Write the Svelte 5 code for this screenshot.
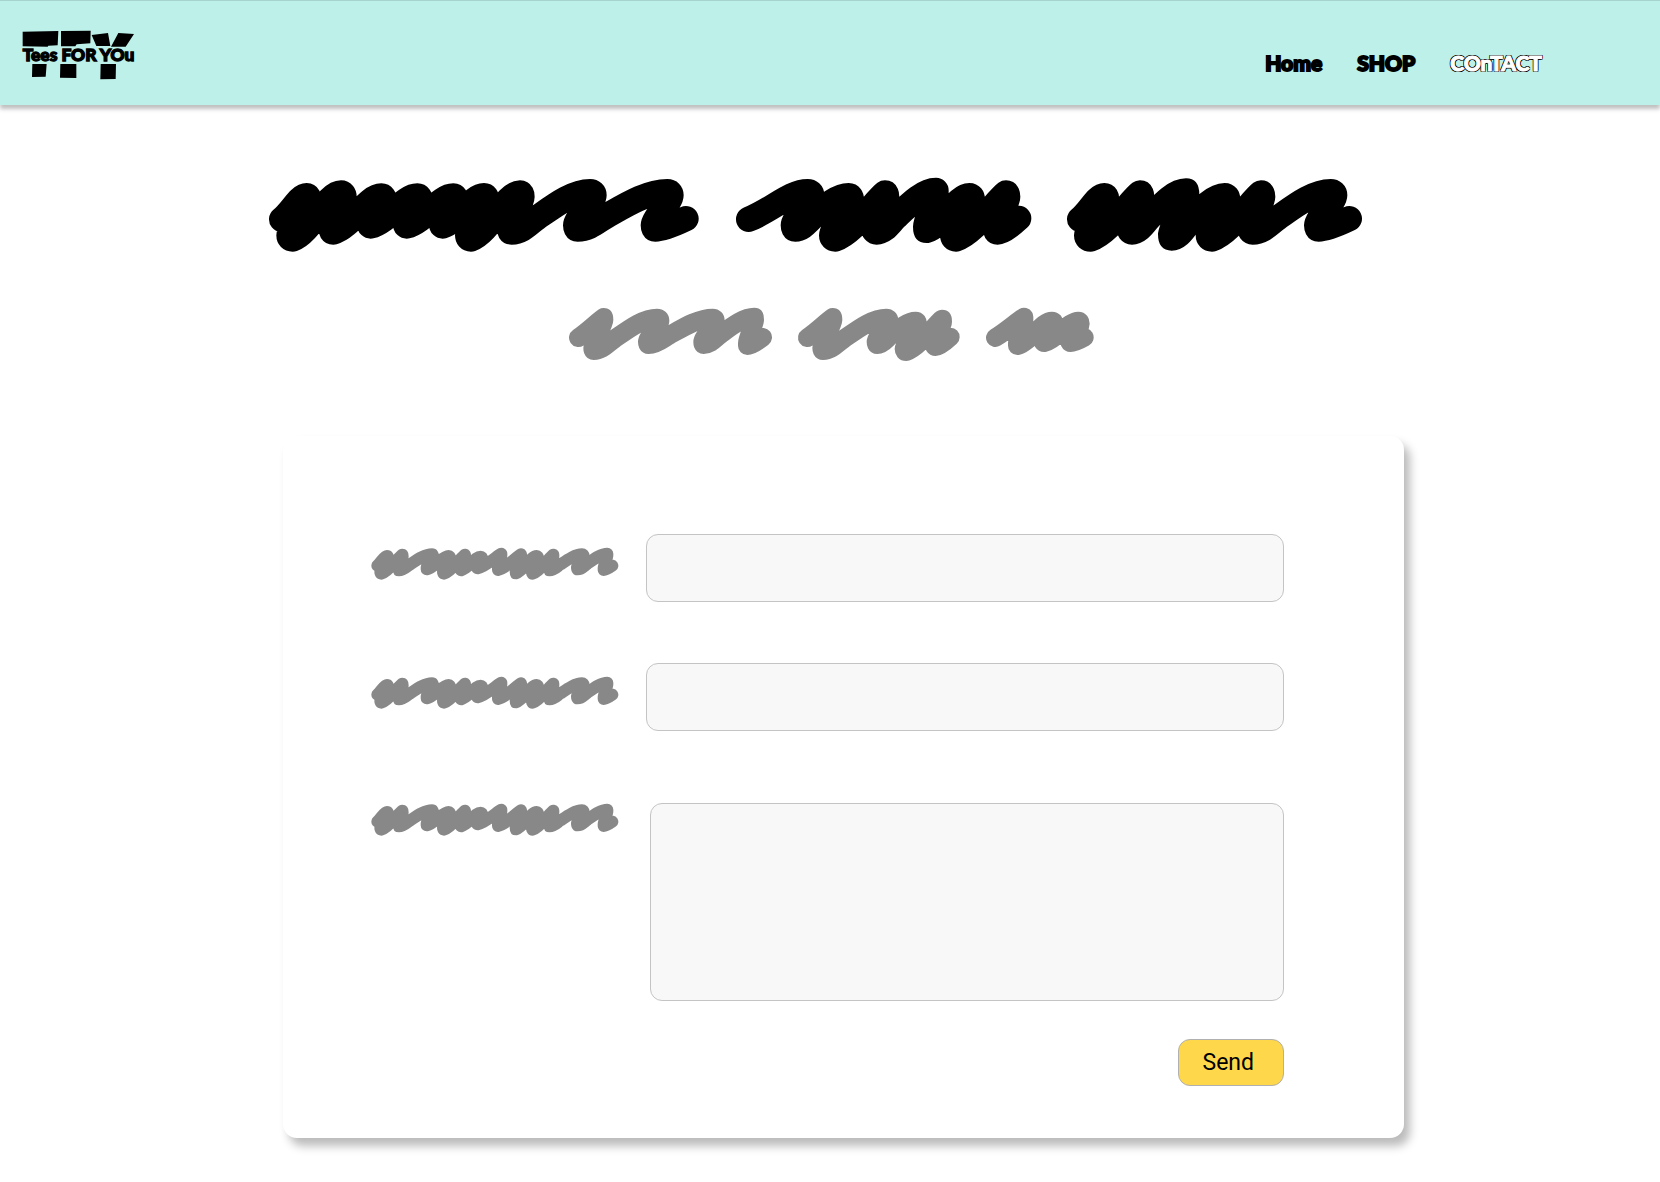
<script>
  // A scribble is a pen line: start point, alternating peaks and valleys, end point.
  // Peak: [top x, top y, right edge x]; valley: [bottom x, bottom y, left edge x].
  function scribble({ r, start, turns, end }) {
    const k = Math.round(r * 0.3);
    let [x, y] = start;
    let d = `M${x} ${y}`;
    turns.forEach(([tx, ty, edge], i) => {
      if (i % 2 === 0) {
        const px = Math.min(tx, edge - r);
        const py = ty + r;
        const rx = edge - r;
        const dx = px - x;
        const dy = py - y;
        const narrow = rx - tx < r * 0.15;
        if (i > 0 && dx > r * 4) {
          // a long sweep climbs out of the valley first, then runs almost straight
          d += `C${x + dx * 0.14} ${y} ${x + dx * 0.23} ${y + dy * 0.23} ${x + dx * 0.33} ${y + dy * 0.36}`;
          d += `C${x + dx * 0.55} ${y + dy * 0.66} ${px - dx * 0.22} ${py} ${px} ${py}`;
        } else {
          const c1 = i === 0 ? [x + dx * 0.4, y + dy * 0.34] : [x + dx * 0.38, y + dy * 0.14];
          const c2 = narrow ? [px - dx * 0.2, py - dy * 0.16] : [px - dx * 0.3, py];
          d += `C${c1[0]} ${c1[1]} ${c2[0]} ${c2[1]} ${px} ${py}`;
        }
        d += `Q${rx} ${py} ${rx} ${py + k}`;
        x = rx;
        y = py + k;
      } else {
        const by = ty - r;
        const lx = edge + r;
        const bx = Math.max(tx, lx);
        d += `C${x} ${y + k * 2} ${lx} ${by - k * 3} ${lx} ${by - k}`;
        d += `Q${lx} ${by} ${bx} ${by}`;
        x = bx;
        y = by;
      }
    });
    return `${d}Q${x + (end[0] - x) * 0.3} ${y} ${end[0]} ${end[1]}`;
  }

  const title = [
    { r: 38, box: '27 36 1290 225', w: 430, start: [65, 163], end: [1278, 161],
      turns: [[140,54,184],[98,260,49],[243,46,290],[220,239,175],[364,55,410],[332,221,290],[472,55,518],[440,221,398],[580,55,625],[548,221,506],[672,54,718],[633,260,585],[780,46,824],[755,239,710],[990,42,1040],[953,230,909],[1222,42,1271],[1186,230,1142]] },
    { r: 38, box: '47 36 888 225', w: 296, start: [88, 163], end: [898, 160],
      turns: [[265,42,315],[228,230,184],[388,54,434],[348,260,299],[497,46,540],[472,239,425],[650,38,688],[622,234,581],[750,54,797],[710,260,662],[860,46,903],[835,239,790]] },
    { r: 38, box: '51 36 888 225', w: 296, start: [89, 163], end: [898, 161],
      turns: [[163,54,208],[122,260,72],[270,46,313],[246,239,200],[408,40,448],[365,257,324],[524,54,571],[486,260,437],[633,46,676],[608,239,562],[842,42,892],[806,230,762]] }
  ];

  const subtitle = [
    { r: 28, box: '26 36 609 165', w: 203, start: [54, 128], end: [607, 127],
      turns: [[130,39,159],[100,195,69],[290,41,327],[265,177,233],[457,41,493],[430,177,399],[582,38,611],[561,180,533]] },
    { r: 28, box: '55 36 486 165', w: 162, start: [83, 128], end: [512, 126],
      turns: [[159,39,188],[130,195,98],[320,41,356],[293,177,261],[408,50,442],[380,198,345],[487,44,517],[468,183,435]] },
    { r: 28, box: '618 36 324 165', w: 108, start: [646, 128], end: [913, 127],
      turns: [[732,38,760],[711,180,684],[816,50,851],[793,171,760],[895,50,929],[872,171,840]] }
  ];

  const labelMark = {
    r: 18, box: '33 81 744 99', w: 248, start: [52, 137], end: [757, 137],
    turns: [[81,90,102],[64,179,43],[127,86,146],[117,169,98],[216,85,237],[200,166,182],[266,90,288],[252,179,231],[315,86,333],[303,169,285],[362,92,384],[352,163,334],[425,83,442],[413,168,396],[486,85,501],[468,178,449],[530,90,552],[518,179,498],[580,86,598],[569,169,550],[666,85,689],[653,166,633],[742,83,760],[731,168,713]]
  };
</script>

{#snippet mark(word, height)}
  <svg class="mark" viewBox={word.box} width={word.w} {height} aria-hidden="true">
    <path d={scribble(word)} stroke-width={word.r * 2} />
  </svg>
{/snippet}

<div class="page">
  <header>
    <a class="logo" href="#home" aria-label="Tees for you">
      <svg viewBox="66 90 342 150" width="114" height="50">
        <path d="M68 95L175 93L173 136L145 137L143 140L68 139ZM183 93L272 92L271 130L230 133L226 139L183 139ZM275 105L324 99L331 138L289 138ZM355 99L402 102L377 140L333 140ZM97 192L140 192L137 230L96 231ZM181 192L229 192L229 234L180 233ZM302 192L348 192L347 237L301 238Z" />
        <text x="68" y="184">Tees FOR YOu</text>
      </svg>
    </a>
    <nav>
      <a href="#home">Home</a>
      <a href="#shop">SHOP</a>
      <a class="current" href="#contact" aria-current="page">COnTACT</a>
    </nav>
  </header>

  <main>
    <h1>{#each title as word}{@render mark(word, 75)}{/each}</h1>
    <h2>{#each subtitle as word}{@render mark(word, 55)}{/each}</h2>

    <form>
      <div class="row">
        <label for="first">{@render mark(labelMark, 33)}</label>
        <input id="first" type="text" />
      </div>
      <div class="row">
        <label for="second">{@render mark(labelMark, 33)}</label>
        <input id="second" type="text" />
      </div>
      <div class="row message">
        <label for="message">{@render mark(labelMark, 33)}</label>
        <textarea id="message"></textarea>
      </div>
      <button type="button">Send</button>
    </form>
  </main>
</div>

<style>
  :global(body) {
    background: #fff;
  }
  .page {
    font-family: Roboto, 'Liberation Sans', sans-serif;
    color: #000;
    padding-bottom: 43px;
  }
  header {
    display: flex;
    align-items: center;
    justify-content: space-between;
    box-sizing: border-box;
    height: 105px;
    padding: 0 118px 0 22px;
    background: #bdf0e8;
    border-top: 1px solid #a6d3cc;
    box-shadow: 0 4px 4px rgba(0, 0, 0, 0.25);
  }
  .logo svg {
    display: block;
    margin-top: 4px;
    overflow: visible;
  }
  .logo text {
    font-family: Lato, sans-serif;
    font-weight: 900;
    font-size: 52px;
    stroke: #000;
    stroke-width: 4px;
  }
  nav {
    display: flex;
    gap: 35px;
    padding-top: 20px;
  }
  nav a {
    font-family: Lato, sans-serif;
    font-size: 21px;
    line-height: 28px;
    font-weight: 900;
    color: #000;
    text-decoration: none;
    -webkit-text-stroke: 2px #000;
  }
  nav .current {
    color: #fff;
    -webkit-text-stroke: 1px #fff;
    text-shadow:
      -1px -1px #000,
      1px -1px #000,
      -1px 1px #000,
      1px 1px #000,
      -1px 0 #000,
      1px 0 #000,
      0 -1px #000,
      0 1px #000;
  }
  .mark {
    display: block;
    overflow: visible;
  }
  .mark path {
    fill: none;
    stroke: currentColor;
    stroke-linecap: round;
    stroke-linejoin: round;
  }
  h1,
  h2 {
    display: flex;
    justify-content: center;
    margin: 0;
  }
  h1 {
    gap: 36px;
    padding: 72px 28px 0 0;
  }
  h2 {
    gap: 26px;
    padding: 55px 0 0 2px;
    color: #888;
  }
  form {
    display: flex;
    flex-direction: column;
    margin: 74px 256px 0 283px;
    padding: 98px 120px 52px 88px;
    border-radius: 14px;
    background: #fff;
    box-shadow: 6px 8px 10px rgba(0, 0, 0, 0.27);
  }
  .row {
    display: flex;
    align-items: flex-start;
    gap: 27px;
    margin-bottom: 61px;
  }
  label {
    padding-top: 13px;
    color: #888;
  }
  input,
  textarea {
    flex: 1;
    min-width: 0;
    box-sizing: border-box;
    height: 68px;
    padding: 12px 16px;
    border: 1px solid #c4c4c4;
    border-radius: 12px;
    background: #f8f8f8;
    font: 24px Roboto, sans-serif;
  }
  .message {
    gap: 31px;
    margin-bottom: 38px;
  }
  .message label {
    padding-top: 11px;
  }
  textarea {
    height: 198px;
    margin-top: 11px;
    resize: none;
  }
  button {
    align-self: flex-end;
    height: 47px;
    padding: 0 29px 0 23px;
    border: 1px solid #b0b0b0;
    border-radius: 12px;
    background: #ffd74b;
    color: #000;
    font: 23px Roboto, sans-serif;
  }
</style>
